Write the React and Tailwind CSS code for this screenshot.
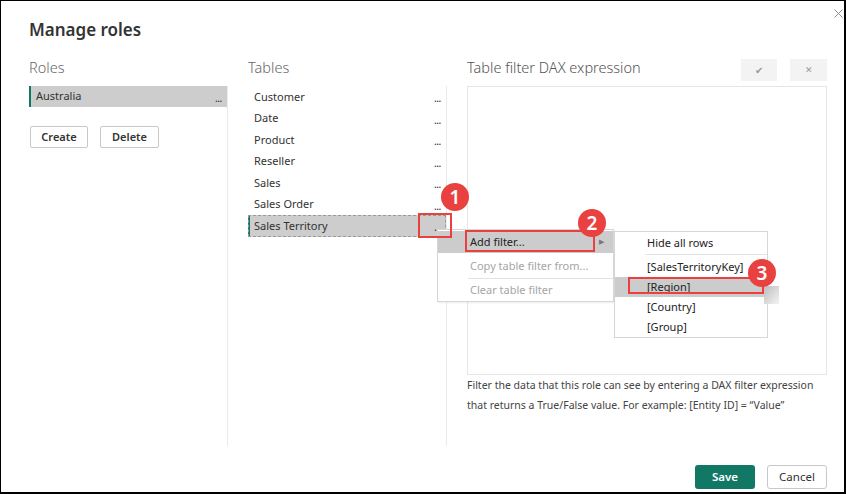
import { X } from 'lucide-react'

const TABLES = ['Customer', 'Date', 'Product', 'Reseller', 'Sales', 'Sales Order', 'Sales Territory']
const COLUMNS = ['[SalesTerritoryKey]', '[Region]', '[Country]', '[Group]']

function Dots() {
  return <span className="text-[8px] font-bold leading-none tracking-normal text-[#333] mt-[5px]">...</span>
}

function Badge({ n, className }) {
  return (
    <div
      className={`absolute w-[28px] h-[28px] rounded-full bg-[#e8413f] text-white text-[19px] font-semibold flex items-center justify-center leading-none ${className}`}
    >
      {n}
    </div>
  )
}

export default function App() {
  return (
    <div
      className="relative w-[846px] h-[494px] bg-white border-l border-t border-r-2 border-b-2 border-black overflow-hidden text-[#333]"
      style={{ fontFamily: '"Noto Sans", "Liberation Sans", sans-serif' }}
    >
      {/* close */}
      <X className="absolute right-[-2px] top-[5px] text-[#888]" size={15} strokeWidth={1.5} />

      <h1 className="pl-[28px] pt-[17px] h-[54px] text-[17px] font-semibold text-[#333] leading-[24px]">Manage roles</h1>

      <div className="flex">
        {/* Roles */}
        <div className="w-[227px] pl-[28px] flex flex-col">
          <div className="h-[31px] text-[14.5px] font-light text-[#666] leading-[24px]">Roles</div>
          <div className="h-[360px] border-r border-[#ebebeb] flex flex-col">
            <div className="h-[21px] bg-[#cdcdcd] border-l-2 border-[#117865] flex items-center justify-between pl-[5px] pr-[5px] text-[11px]">
              <span>Australia</span>
              <Dots />
            </div>
            <div className="flex gap-[12px] mt-[19px] pl-[1px]">
              <button className="w-[58px] h-[22px] border border-[#c8c8c8] rounded-[2px] text-[11px] font-semibold text-[#333]">Create</button>
              <button className="w-[59px] h-[22px] border border-[#c8c8c8] rounded-[2px] text-[11px] font-semibold text-[#333]">Delete</button>
            </div>
          </div>
        </div>

        {/* Tables */}
        <div className="w-[219px] pl-[20px] flex flex-col">
          <div className="h-[31px] text-[14.5px] font-light text-[#666] leading-[24px]">Tables</div>
          <div className="h-[360px] border-r border-[#ebebeb] flex flex-col">
            {TABLES.map((t, i) => {
              const sel = i === TABLES.length - 1
              return (
                <div
                  key={t}
                  className={`h-[21.5px] flex items-center justify-between pr-[5px] text-[11px] ${
                    sel ? 'bg-[#cdcdcd] border-l-2 border-[#117865] pl-[4px] outline outline-1 outline-dashed outline-[#999] -outline-offset-1' : 'pl-[6px]'
                  }`}
                >
                  <span>{t}</span>
                  <Dots />
                </div>
              )
            })}
          </div>
        </div>

        {/* DAX */}
        <div className="flex-1 pl-[20px] pr-[17px] flex flex-col">
          <div className="h-[31px] flex items-start justify-between">
            <div className="text-[14.5px] font-light text-[#555] leading-[24px]">Table filter DAX expression</div>
            <div className="flex gap-[13px] mt-[4px]">
              <div className="w-[36px] h-[22px] bg-[#f3f3f3] flex items-center justify-center text-[10px] text-[#999]">✔</div>
              <div className="w-[37px] h-[22px] bg-[#f3f3f3] flex items-center justify-center text-[9px] text-[#999]">✕</div>
            </div>
          </div>
          <div className="h-[289px] border border-[#e6e6e6]" />
          <p className="text-[10.5px] leading-[20px] text-[#444] pr-[10px]">
            Filter the data that this role can see by entering a DAX filter expression that returns a True/False value. For example: [Entity ID] = “Value”
          </p>
        </div>
      </div>

      {/* footer */}
      <div className="flex justify-end gap-[12px] pr-[17px] mt-[19px]">
        <button className="w-[60px] h-[24px] bg-[#117865] rounded-[3px] text-white text-[11.5px] font-semibold">Save</button>
        <button className="w-[60px] h-[24px] border border-[#c8c8c8] rounded-[3px] text-[11.5px] text-[#333]">Cancel</button>
      </div>

      {/* context menu */}
      <div className="absolute left-[436px] top-[228px] w-[177px] bg-white border border-[#d6d6d6] pt-[1px] text-[11px] shadow-[1px_1px_2px_rgba(0,0,0,0.08)]">
        <div className="h-[22px] bg-[#cccccc] flex items-center justify-between pl-[32px] pr-[9px] text-[#222]">
          <span>Add filter...</span>
          <span className="text-[7px] text-[#777]">▶</span>
        </div>
        <div className="h-[24px] mt-[1px] flex items-center pl-[32px] text-[#a5a5a5]">Copy table filter from...</div>
        <div className="ml-[30px] h-px bg-[#e3e3e3]" />
        <div className="h-[22px] flex items-center pl-[32px] text-[#a5a5a5]">Clear table filter</div>
      </div>

      {/* submenu */}
      <div className="absolute left-[613px] top-[230px] w-[154px] bg-white border border-[#d6d6d6] text-[11px] text-[#222]">
        <div className="h-[22px] flex items-center pl-[32px]">Hide all rows</div>
        <div className="ml-[30px] h-px bg-[#e3e3e3] mb-[2px]" />
        {COLUMNS.map((c) => (
          <div key={c} className={`h-[20px] flex items-center pl-[32px] ${c === '[Region]' ? 'bg-[#cccccc]' : ''}`}>
            {c}
          </div>
        ))}
      </div>
      <div className="absolute left-[763px] top-[285px] w-[15px] h-[18px] bg-gradient-to-br from-[#bdbdbd] to-[#f4f4f4]" />

      {/* annotations */}
      <div className="absolute left-[417px] top-[212px] w-[34px] h-[25px] border-2 border-[#e8413f]" />
      <div className="absolute left-[464px] top-[229px] w-[130px] h-[22px] border-2 border-[#e8413f]" />
      <div className="absolute left-[627px] top-[276px] w-[136px] h-[17px] border-2 border-[#e8413f]" />
      <Badge n="1" className="left-[440px] top-[182px]" />
      <Badge n="2" className="left-[577px] top-[208px]" />
      <Badge n="3" className="left-[747px] top-[258px]" />
    </div>
  )
}
